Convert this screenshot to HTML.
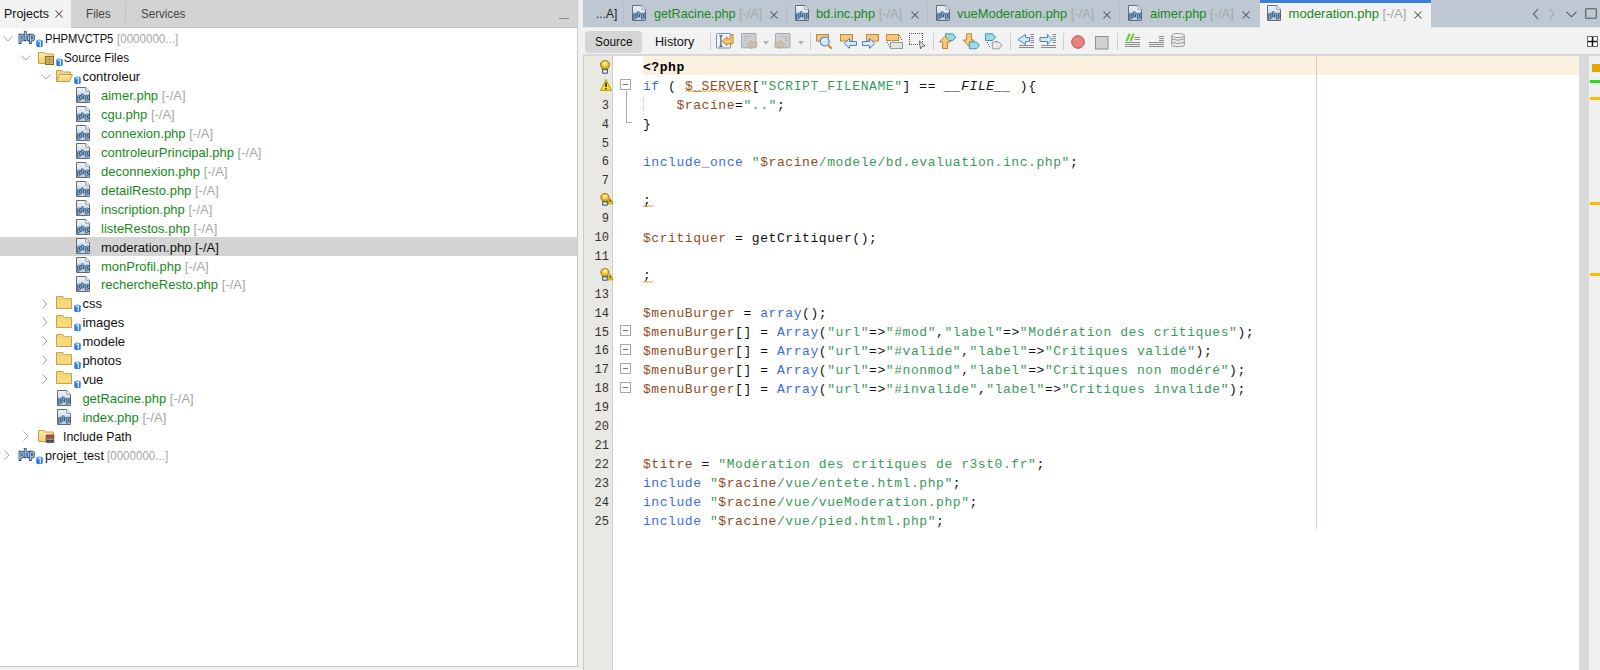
<!DOCTYPE html>
<html><head><meta charset="utf-8"><style>
*{margin:0;padding:0;box-sizing:border-box}
html,body{width:1600px;height:670px;overflow:hidden;background:#f0f0f0;font-family:"Liberation Sans",sans-serif;font-size:13px;color:#000;position:relative}
.abs{position:absolute}
.ic{position:absolute;overflow:visible}
.tt{position:absolute;white-space:nowrap;font-size:13px;line-height:16px;color:#111}
.g{color:#17891a}
.gr{color:#a6a6a6}
.cl{position:absolute;left:643px;white-space:pre;font-family:"Liberation Mono",monospace;font-size:13px;letter-spacing:0.57px;line-height:19px;color:#111}
.cl i{font-style:italic}
.kw{color:#3b6de0}
.v{color:#8f4c1e}
.s{color:#3a9a5c}
.ph{font-weight:bold;color:#000}
.sq{text-decoration:underline wavy #f0a020;text-decoration-thickness:1px;text-underline-offset:2px}
.ln{position:absolute;left:584px;width:25px;text-align:right;font-family:"Liberation Mono",monospace;font-size:12px;line-height:16px;color:#333}
.fold{position:absolute;left:620px;width:11px;height:11px;border:1px solid #a8a8a8;background:#fff}
.fold:after{content:"";position:absolute;left:2px;top:4px;width:5px;height:1px;background:#777}
</style></head><body>

<svg width="0" height="0" style="position:absolute">
<defs>
 <linearGradient id="gpage" x1="0" y1="0" x2="0" y2="1">
  <stop offset="0" stop-color="#eef3f8"/><stop offset="1" stop-color="#b9cbdd"/>
 </linearGradient>
 <linearGradient id="gfold" x1="0" y1="0" x2="0" y2="1">
  <stop offset="0" stop-color="#fbe7a6"/><stop offset="1" stop-color="#efcf74"/>
 </linearGradient>
 <symbol id="phpfile" viewBox="0 0 14 16">
  <path d="M0.5 0.5H9.8L13.5 4.2V15.5H0.5Z" fill="url(#gpage)" stroke="#646d76"/>
  <path d="M9.8 0.5V4.2H13.5" fill="#fff" stroke="#8f99a3"/>
  <path d="M2.2 8.6V14.4M2.2 8.799999999999999H3.5199999999999996Q4.6 8.799999999999999 4.6 10.45Q4.6 12.3 3.5199999999999996 12.3H2.2M6.199999999999999 6.6V12.3M6.199999999999999 8.799999999999999H7.52Q8.6 8.799999999999999 8.6 9.68V12.3M10.2 8.6V14.4M10.2 8.799999999999999H11.52Q12.6 8.799999999999999 12.6 10.45Q12.6 12.3 11.52 12.3H10.2" fill="none" stroke="#2c4a6a" stroke-width="2.3" stroke-linejoin="round"/>
  <path d="M2.2 8.6V14.4M2.2 8.799999999999999H3.5199999999999996Q4.6 8.799999999999999 4.6 10.45Q4.6 12.3 3.5199999999999996 12.3H2.2M6.199999999999999 6.6V12.3M6.199999999999999 8.799999999999999H7.52Q8.6 8.799999999999999 8.6 9.68V12.3M10.2 8.6V14.4M10.2 8.799999999999999H11.52Q12.6 8.799999999999999 12.6 10.45Q12.6 12.3 11.52 12.3H10.2" fill="none" stroke="#9fc6ee" stroke-width="0.9"/>
 </symbol>
 <symbol id="projphp" viewBox="0 0 17 13">
  <path d="M2.0 4.0V12.0M2.0 4.2H3.76Q5.2 4.2 5.2 6.5Q5.2 9.0 3.76 9.0H2.0M7.2 0.6V9.0M7.2 4.2H8.96Q10.4 4.2 10.4 5.44V9.0M12.4 4.0V12.0M12.4 4.2H14.160000000000002Q15.600000000000001 4.2 15.600000000000001 6.5Q15.600000000000001 9.0 14.160000000000002 9.0H12.4" fill="none" stroke="#2e4660" stroke-width="2.8" stroke-linejoin="round" stroke-linecap="round"/>
  <path d="M2.0 4.0V12.0M2.0 4.2H3.76Q5.2 4.2 5.2 6.5Q5.2 9.0 3.76 9.0H2.0M7.2 0.6V9.0M7.2 4.2H8.96Q10.4 4.2 10.4 5.44V9.0M12.4 4.0V12.0M12.4 4.2H14.160000000000002Q15.600000000000001 4.2 15.600000000000001 6.5Q15.600000000000001 9.0 14.160000000000002 9.0H12.4" fill="none" stroke="#9cc4ee" stroke-width="1.3"/>
 </symbol>
 <symbol id="badge" viewBox="0 0 7 9">
  <path d="M0.3 2V7C0.3 8.6 6.7 8.6 6.7 7V2Z" fill="#2a7ae6"/>
  <ellipse cx="3.5" cy="2" rx="3.2" ry="1.6" fill="#3f8ff0"/>
  <path d="M2.2 2.2H4.3V7.5" stroke="#e4f0ff" stroke-width="1.2" fill="none"/>
 </symbol>
 <symbol id="folder" viewBox="0 0 16 13">
  <path d="M0.5 12.5V0.5H6.8L8.3 2.5H15.5V12.5Z" fill="#f7d97c" stroke="#c3a24f"/>
  <path d="M1 2.8H15" stroke="#e9c866" stroke-width="0.6"/>
 </symbol>
 <symbol id="folderopen" viewBox="0 0 17 13">
  <path d="M0.5 12.5V1.5H6L7.5 3H14.5V5" fill="#f3d684" stroke="#c4a04a"/>
  <path d="M0.5 12.5L3.5 5.5H16.5L13.5 12.5Z" fill="url(#gfold)" stroke="#c4a04a"/>
 </symbol>
 <symbol id="srcfolder" viewBox="0 0 17 14">
  <path d="M0.5 12.5V1.5H6L7.5 3H15.5V12.5Z" fill="url(#gfold)" stroke="#c4a04a"/>
  <rect x="7.5" y="5.5" width="8" height="8" fill="#d9b865" stroke="#8a6a2a"/>
  <path d="M8 8.5H15M8 11H15M11.5 6V13" stroke="#a9863d" stroke-width="0.8"/>
 </symbol>
 <symbol id="incfolder" viewBox="0 0 17 14">
  <path d="M0.5 12.5V1.5H6L7.5 3H15.5V12.5Z" fill="url(#gfold)" stroke="#c4a04a"/>
  <rect x="8" y="6" width="8" height="3" rx="1" fill="#b35050" stroke="#6b3030" stroke-width="0.7"/>
  <rect x="8" y="9" width="8" height="2.5" rx="1" fill="#a98a50" stroke="#6b5030" stroke-width="0.7"/>
  <rect x="8" y="11.5" width="8" height="2.3" rx="1" fill="#4a5a8a" stroke="#303a60" stroke-width="0.7"/>
 </symbol>
 <symbol id="chevd" viewBox="0 0 10 6">
  <path d="M0.5 0.5L5 5L9.5 0.5" stroke="#a6a6a6" fill="none" stroke-width="1"/>
 </symbol>
 <symbol id="chevr" viewBox="0 0 6 10">
  <path d="M0.5 0.5L5 5L0.5 9.5" stroke="#a6a6a6" fill="none" stroke-width="1"/>
 </symbol>
 <symbol id="closex" viewBox="0 0 8 8">
  <path d="M0.5 0.5L7.5 7.5M7.5 0.5L0.5 7.5" stroke="#4d4d4d" stroke-width="1.05"/>
 </symbol>
</defs>
</svg>

<svg width="0" height="0" style="position:absolute">
<defs>
 <radialGradient id="gbulb" cx="0.5" cy="0.35" r="0.65">
  <stop offset="0" stop-color="#fffbe0"/><stop offset="0.35" stop-color="#f5d65a"/><stop offset="0.8" stop-color="#d9a514"/><stop offset="1" stop-color="#a87c00"/>
 </radialGradient>
 <symbol id="bulb" viewBox="0 0 10 14">
  <path d="M5 0.5C2.2 0.5 0.5 2.3 0.5 4.6C0.5 6.6 2 7.6 2.4 9.4H7.6C8 7.6 9.5 6.6 9.5 4.6C9.5 2.3 7.8 0.5 5 0.5Z" fill="url(#gbulb)" stroke="#9a7400" stroke-width="0.9"/>
  <rect x="2.5" y="9.5" width="5" height="3.8" rx="0.9" fill="#dfe6ee" stroke="#3f5068" stroke-width="1.1"/>
 </symbol>
 <symbol id="warn" viewBox="0 0 12 12">
  <path d="M6 0.6L11.5 11.4H0.5Z" fill="#f7e400" stroke="#b39200" stroke-width="0.9" stroke-linejoin="round"/>
  <path d="M6 3.8V8" stroke="#111" stroke-width="1.5"/><rect x="5.25" y="9" width="1.5" height="1.4" fill="#111"/>
 </symbol>
 <symbol id="warnsm" viewBox="0 0 7 7">
  <path d="M3.5 0.5L6.6 6.5H0.4Z" fill="#f2e200" stroke="#8a7000" stroke-width="0.8" stroke-linejoin="round"/>
  <path d="M3.5 2.4V4.4" stroke="#111" stroke-width="1"/>
 </symbol>
</defs>
</svg>

<div class="abs" style="left:0;top:0;width:577px;height:666px;background:#fff"></div>
<div class="abs" style="left:577px;top:0;width:1px;height:667px;background:#c9c9c9"></div>
<div class="abs" style="left:0;top:666px;width:578px;height:1px;background:#c9c9c9"></div>
<div class="abs" style="left:0;top:0;width:577px;height:28px;background:#d3d3d3"></div>
<div class="abs" style="left:70px;top:27px;width:507px;height:1px;background:#c4c4c4"></div>
<div class="abs" style="left:0;top:0;width:70.5px;height:28px;background:#f2f2f2"></div>
<div class="tt" style="left:3.5px;top:5.5px;transform:scaleX(0.955);transform-origin:0 0">Projects</div>
<svg class="ic" style="left:55px;top:9.8px;width:8px;height:8px" viewBox="0 0 8 8"><use href="#closex" width="8" height="8"/></svg>
<div class="tt" style="left:85.5px;top:5.5px;color:#444;transform:scaleX(0.9);transform-origin:0 0">Files</div>
<div class="abs" style="left:125px;top:3px;width:1px;height:20px;background:#c2c2c2"></div>
<div class="tt" style="left:141px;top:5.5px;color:#444;transform:scaleX(0.89);transform-origin:0 0">Services</div>
<div class="abs" style="left:559px;top:17.5px;width:10px;height:1.5px;background:#8a8a8a"></div>
<div class="abs" style="left:0;top:236.95px;width:577px;height:18.95px;background:#d4d4d4"></div>
<svg class="ic" style="left:2.5px;top:35.8px;width:10px;height:6px" viewBox="0 0 10 6"><use href="#chevd" width="10" height="6"/></svg>
<svg class="ic" style="left:18px;top:31.1px;width:17px;height:13px" viewBox="0 0 17 13"><use href="#projphp" width="17" height="13"/></svg>
<svg class="ic" style="left:36px;top:38.7px;width:7px;height:9px" viewBox="0 0 7 9"><use href="#badge" width="7" height="9"/></svg>
<div class="tt " style="left:44.5px;top:31.10px;transform:scaleX(0.86);transform-origin:0 0">PHPMVCTP5</div>
<div class="tt " style="left:117px;top:31.10px;transform:scaleX(0.89);transform-origin:0 0"><span class="gr">[0000000...]</span></div>
<svg class="ic" style="left:21px;top:54.8px;width:10px;height:6px" viewBox="0 0 10 6"><use href="#chevd" width="10" height="6"/></svg>
<svg class="ic" style="left:38px;top:50.5px;width:17px;height:14px" viewBox="0 0 17 14"><use href="#srcfolder" width="17" height="14"/></svg>
<svg class="ic" style="left:55.5px;top:58.0px;width:7px;height:9px" viewBox="0 0 7 9"><use href="#badge" width="7" height="9"/></svg>
<div class="tt " style="left:63.5px;top:50.05px;transform:scaleX(0.9);transform-origin:0 0">Source Files</div>
<svg class="ic" style="left:40.5px;top:73.7px;width:10px;height:6px" viewBox="0 0 10 6"><use href="#chevd" width="10" height="6"/></svg>
<svg class="ic" style="left:56px;top:69.2px;width:17px;height:13px" viewBox="0 0 17 13"><use href="#folderopen" width="17" height="13"/></svg>
<svg class="ic" style="left:74px;top:76.4px;width:7px;height:9px" viewBox="0 0 7 9"><use href="#badge" width="7" height="9"/></svg>
<div class="tt " style="left:82.4px;top:69.00px">controleur</div>
<svg class="ic" style="left:76.4px;top:86.5px;width:14px;height:16px" viewBox="0 0 14 16"><use href="#phpfile" width="14" height="16"/></svg>
<div class="tt " style="left:101px;top:87.95px"><span class="g">aimer.php</span> <span class="gr">[-/A]</span></div>
<svg class="ic" style="left:76.4px;top:105.5px;width:14px;height:16px" viewBox="0 0 14 16"><use href="#phpfile" width="14" height="16"/></svg>
<div class="tt " style="left:101px;top:106.90px"><span class="g">cgu.php</span> <span class="gr">[-/A]</span></div>
<svg class="ic" style="left:76.4px;top:124.5px;width:14px;height:16px" viewBox="0 0 14 16"><use href="#phpfile" width="14" height="16"/></svg>
<div class="tt " style="left:101px;top:125.85px"><span class="g">connexion.php</span> <span class="gr">[-/A]</span></div>
<svg class="ic" style="left:76.4px;top:143.4px;width:14px;height:16px" viewBox="0 0 14 16"><use href="#phpfile" width="14" height="16"/></svg>
<div class="tt " style="left:101px;top:144.80px"><span class="g">controleurPrincipal.php</span> <span class="gr">[-/A]</span></div>
<svg class="ic" style="left:76.4px;top:162.3px;width:14px;height:16px" viewBox="0 0 14 16"><use href="#phpfile" width="14" height="16"/></svg>
<div class="tt " style="left:101px;top:163.75px"><span class="g">deconnexion.php</span> <span class="gr">[-/A]</span></div>
<svg class="ic" style="left:76.4px;top:181.3px;width:14px;height:16px" viewBox="0 0 14 16"><use href="#phpfile" width="14" height="16"/></svg>
<div class="tt " style="left:101px;top:182.70px"><span class="g">detailResto.php</span> <span class="gr">[-/A]</span></div>
<svg class="ic" style="left:76.4px;top:200.2px;width:14px;height:16px" viewBox="0 0 14 16"><use href="#phpfile" width="14" height="16"/></svg>
<div class="tt " style="left:101px;top:201.65px"><span class="g">inscription.php</span> <span class="gr">[-/A]</span></div>
<svg class="ic" style="left:76.4px;top:219.2px;width:14px;height:16px" viewBox="0 0 14 16"><use href="#phpfile" width="14" height="16"/></svg>
<div class="tt " style="left:101px;top:220.60px"><span class="g">listeRestos.php</span> <span class="gr">[-/A]</span></div>
<svg class="ic" style="left:76.4px;top:238.1px;width:14px;height:16px" viewBox="0 0 14 16"><use href="#phpfile" width="14" height="16"/></svg>
<div class="tt " style="left:101px;top:239.55px">moderation.php [-/A]</div>
<svg class="ic" style="left:76.4px;top:257.1px;width:14px;height:16px" viewBox="0 0 14 16"><use href="#phpfile" width="14" height="16"/></svg>
<div class="tt " style="left:101px;top:258.50px"><span class="g">monProfil.php</span> <span class="gr">[-/A]</span></div>
<svg class="ic" style="left:76.4px;top:276.1px;width:14px;height:16px" viewBox="0 0 14 16"><use href="#phpfile" width="14" height="16"/></svg>
<div class="tt " style="left:101px;top:277.45px"><span class="g">rechercheResto.php</span> <span class="gr">[-/A]</span></div>
<svg class="ic" style="left:42px;top:298.5px;width:6px;height:10px" viewBox="0 0 6 10"><use href="#chevr" width="6" height="10"/></svg>
<svg class="ic" style="left:56.4px;top:295.6px;width:16px;height:13px" viewBox="0 0 16 13"><use href="#folder" width="16" height="13"/></svg>
<svg class="ic" style="left:73.5px;top:304.0px;width:7px;height:9px" viewBox="0 0 7 9"><use href="#badge" width="7" height="9"/></svg>
<div class="tt " style="left:82.4px;top:296.40px">css</div>
<svg class="ic" style="left:42px;top:317.4px;width:6px;height:10px" viewBox="0 0 6 10"><use href="#chevr" width="6" height="10"/></svg>
<svg class="ic" style="left:56.4px;top:314.6px;width:16px;height:13px" viewBox="0 0 16 13"><use href="#folder" width="16" height="13"/></svg>
<svg class="ic" style="left:73.5px;top:322.9px;width:7px;height:9px" viewBox="0 0 7 9"><use href="#badge" width="7" height="9"/></svg>
<div class="tt " style="left:82.4px;top:315.35px">images</div>
<svg class="ic" style="left:42px;top:336.4px;width:6px;height:10px" viewBox="0 0 6 10"><use href="#chevr" width="6" height="10"/></svg>
<svg class="ic" style="left:56.4px;top:333.5px;width:16px;height:13px" viewBox="0 0 16 13"><use href="#folder" width="16" height="13"/></svg>
<svg class="ic" style="left:73.5px;top:341.9px;width:7px;height:9px" viewBox="0 0 7 9"><use href="#badge" width="7" height="9"/></svg>
<div class="tt " style="left:82.4px;top:334.30px">modele</div>
<svg class="ic" style="left:42px;top:355.3px;width:6px;height:10px" viewBox="0 0 6 10"><use href="#chevr" width="6" height="10"/></svg>
<svg class="ic" style="left:56.4px;top:352.4px;width:16px;height:13px" viewBox="0 0 16 13"><use href="#folder" width="16" height="13"/></svg>
<svg class="ic" style="left:73.5px;top:360.8px;width:7px;height:9px" viewBox="0 0 7 9"><use href="#badge" width="7" height="9"/></svg>
<div class="tt " style="left:82.4px;top:353.25px">photos</div>
<svg class="ic" style="left:42px;top:374.3px;width:6px;height:10px" viewBox="0 0 6 10"><use href="#chevr" width="6" height="10"/></svg>
<svg class="ic" style="left:56.4px;top:371.4px;width:16px;height:13px" viewBox="0 0 16 13"><use href="#folder" width="16" height="13"/></svg>
<svg class="ic" style="left:73.5px;top:379.8px;width:7px;height:9px" viewBox="0 0 7 9"><use href="#badge" width="7" height="9"/></svg>
<div class="tt " style="left:82.4px;top:372.20px">vue</div>
<svg class="ic" style="left:57.3px;top:389.8px;width:14px;height:16px" viewBox="0 0 14 16"><use href="#phpfile" width="14" height="16"/></svg>
<div class="tt " style="left:82.4px;top:391.15px"><span class="g">getRacine.php</span> <span class="gr">[-/A]</span></div>
<svg class="ic" style="left:57.3px;top:408.7px;width:14px;height:16px" viewBox="0 0 14 16"><use href="#phpfile" width="14" height="16"/></svg>
<div class="tt " style="left:82.4px;top:410.10px"><span class="g">index.php</span> <span class="gr">[-/A]</span></div>
<svg class="ic" style="left:23px;top:431.1px;width:6px;height:10px" viewBox="0 0 6 10"><use href="#chevr" width="6" height="10"/></svg>
<svg class="ic" style="left:38px;top:429.4px;width:17px;height:14px" viewBox="0 0 17 14"><use href="#incfolder" width="17" height="14"/></svg>
<div class="tt " style="left:63.3px;top:429.05px;transform:scaleX(0.95);transform-origin:0 0">Include Path</div>
<svg class="ic" style="left:4.2px;top:450.1px;width:6px;height:10px" viewBox="0 0 6 10"><use href="#chevr" width="6" height="10"/></svg>
<svg class="ic" style="left:18px;top:448.0px;width:17px;height:13px" viewBox="0 0 17 13"><use href="#projphp" width="17" height="13"/></svg>
<svg class="ic" style="left:36px;top:455.6px;width:7px;height:9px" viewBox="0 0 7 9"><use href="#badge" width="7" height="9"/></svg>
<div class="tt " style="left:44.8px;top:448.00px;transform:scaleX(0.97);transform-origin:0 0">projet_test</div>
<div class="tt " style="left:107px;top:448.00px;transform:scaleX(0.89);transform-origin:0 0"><span class="gr">[0000000...]</span></div>
<div class="abs" style="left:583px;top:55.5px;width:996px;height:615px;background:#fff"></div>
<div class="abs" style="left:583px;top:0;width:1px;height:670px;background:#cbcbcb"></div>
<div class="abs" style="left:584px;top:55.5px;width:28px;height:615px;background:#e9e8e3"></div>
<div class="abs" style="left:612px;top:55.5px;width:1px;height:615px;background:#cfcfcf"></div>
<div class="abs" style="left:643px;top:55.8px;width:936px;height:19px;background:#f9f1de"></div>
<div class="abs" style="left:1316px;top:55.8px;width:1px;height:473px;background:#e2c3dd"></div>
<div class="abs" style="left:1579px;top:55.5px;width:10px;height:615px;background:#dadada"></div>
<div class="abs" style="left:1589px;top:55.5px;width:11px;height:615px;background:#f0f0f0"></div>
<div class="abs" style="left:1591px;top:62.5px;width:10px;height:10px;background:#e2a600;border:1px solid #e8eef6"></div>
<div class="abs" style="left:1590px;top:80px;width:10px;height:3px;background:#22e022"></div>
<div class="abs" style="left:1590px;top:97px;width:10px;height:3px;background:#ffb900"></div>
<div class="abs" style="left:1590px;top:202px;width:10px;height:3px;background:#ffb900"></div>
<div class="abs" style="left:1590px;top:273px;width:10px;height:3px;background:#ffb900"></div>
<div class="ln" style="top:97.75px">3</div>
<div class="ln" style="top:116.65px">4</div>
<div class="ln" style="top:135.55px">5</div>
<div class="ln" style="top:154.45px">6</div>
<div class="ln" style="top:173.35px">7</div>
<div class="ln" style="top:211.15px">9</div>
<div class="ln" style="top:230.05px">10</div>
<div class="ln" style="top:248.95px">11</div>
<div class="ln" style="top:286.75px">13</div>
<div class="ln" style="top:305.65px">14</div>
<div class="ln" style="top:324.55px">15</div>
<div class="ln" style="top:343.45px">16</div>
<div class="ln" style="top:362.35px">17</div>
<div class="ln" style="top:381.25px">18</div>
<div class="ln" style="top:400.15px">19</div>
<div class="ln" style="top:419.05px">20</div>
<div class="ln" style="top:437.95px">21</div>
<div class="ln" style="top:456.85px">22</div>
<div class="ln" style="top:475.75px">23</div>
<div class="ln" style="top:494.65px">24</div>
<div class="ln" style="top:513.55px">25</div>
<svg class="ic" style="left:600px;top:59.5px;width:10px;height:14px" viewBox="0 0 10 14"><use href="#bulb" width="10" height="14"/></svg>
<svg class="ic" style="left:600px;top:78.5px;width:12px;height:12px" viewBox="0 0 12 12"><use href="#warn" width="12" height="12"/></svg>
<svg class="ic" style="left:600px;top:192.6px;width:10px;height:13px" viewBox="0 0 10 13"><use href="#bulb" width="10" height="13"/></svg>
<svg class="ic" style="left:606.5px;top:198.2px;width:6.5px;height:6.5px" viewBox="0 0 6.5 6.5"><use href="#warnsm" width="6.5" height="6.5"/></svg>
<svg class="ic" style="left:600px;top:268.1px;width:10px;height:13px" viewBox="0 0 10 13"><use href="#bulb" width="10" height="13"/></svg>
<svg class="ic" style="left:606.5px;top:273.8px;width:6.5px;height:6.5px" viewBox="0 0 6.5 6.5"><use href="#warnsm" width="6.5" height="6.5"/></svg>
<div class="fold" style="top:79.25px"></div>
<div class="fold" style="top:324.95px"></div>
<div class="fold" style="top:343.85px"></div>
<div class="fold" style="top:362.75px"></div>
<div class="fold" style="top:381.65px"></div>
<div class="abs" style="left:625.5px;top:90.5px;width:1px;height:32px;background:#a8a8a8"></div>
<div class="abs" style="left:625.5px;top:122px;width:6px;height:1px;background:#a8a8a8"></div>
<div class="abs" style="left:643px;top:97.25px;width:0;height:17px;border-left:1px dotted #c8c8c8"></div>
<svg class="ic" style="left:0;top:0;width:1600px;height:670px" viewBox="0 0 1600 670"><path d="M685 91.7L687 90.2L689 91.7L691 90.2L693 91.7L695 90.2L697 91.7L699 90.2L701 91.7L703 90.2L705 91.7L707 90.2L709 91.7L711 90.2L713 91.7L715 90.2L717 91.7L719 90.2L721 91.7L723 90.2L725 91.7L727 90.2L729 91.7L731 90.2L733 91.7L735 90.2L737 91.7L739 90.2L741 91.7L743 90.2L745 91.7L747 90.2L749 91.7L751 90.2L753 91.7" stroke="#f0a030" stroke-width="1" fill="none"/></svg>
<svg class="ic" style="left:0;top:0;width:1600px;height:670px" viewBox="0 0 1600 670"><path d="M643 206.9L645 205.4L647 206.9L649 205.4L651 206.9L653 205.4" stroke="#f0a030" stroke-width="1" fill="none"/></svg>
<svg class="ic" style="left:0;top:0;width:1600px;height:670px" viewBox="0 0 1600 670"><path d="M643 282.5L645 281.0L647 282.5L649 281.0L651 282.5L653 281.0" stroke="#f0a030" stroke-width="1" fill="none"/></svg>
<div class="cl" style="top:58.45px"><b class="ph">&lt;?php</b></div>
<div class="cl" style="top:77.35px"><span class="kw">if</span> ( <span class="v">$_SERVER</span>[<span class="s">"SCRIPT_FILENAME"</span>] == <i>__FILE__</i> ){</div>
<div class="cl" style="top:96.25px">    <span class="v">$racine</span>=<span class="s">".."</span>;</div>
<div class="cl" style="top:115.15px">}</div>
<div class="cl" style="top:152.95px"><span class="kw">include_once</span> <span class="s">"<span class="v">$racine</span>/modele/bd.evaluation.inc.php"</span>;</div>
<div class="cl" style="top:190.75px">;</div>
<div class="cl" style="top:228.55px"><span class="v">$critiquer</span> = getCritiquer();</div>
<div class="cl" style="top:266.35px">;</div>
<div class="cl" style="top:304.15px"><span class="v">$menuBurger</span> = <span class="kw">array</span>();</div>
<div class="cl" style="top:323.05px"><span class="v">$menuBurger</span>[] = <span class="kw">Array</span>(<span class="s">"url"</span>=&gt;<span class="s">"#mod"</span>,<span class="s">"label"</span>=&gt;<span class="s">"Modération des critiques"</span>);</div>
<div class="cl" style="top:341.95px"><span class="v">$menuBurger</span>[] = <span class="kw">Array</span>(<span class="s">"url"</span>=&gt;<span class="s">"#valide"</span>,<span class="s">"label"</span>=&gt;<span class="s">"Critiques validé"</span>);</div>
<div class="cl" style="top:360.85px"><span class="v">$menuBurger</span>[] = <span class="kw">Array</span>(<span class="s">"url"</span>=&gt;<span class="s">"#nonmod"</span>,<span class="s">"label"</span>=&gt;<span class="s">"Critiques non modéré"</span>);</div>
<div class="cl" style="top:379.75px"><span class="v">$menuBurger</span>[] = <span class="kw">Array</span>(<span class="s">"url"</span>=&gt;<span class="s">"#invalide"</span>,<span class="s">"label"</span>=&gt;<span class="s">"Critiques invalide"</span>);</div>
<div class="cl" style="top:455.35px"><span class="v">$titre</span> = <span class="s">"Modération des critiques de r3st0.fr"</span>;</div>
<div class="cl" style="top:474.25px"><span class="kw">include</span> <span class="s">"<span class="v">$racine</span>/vue/entete.html.php"</span>;</div>
<div class="cl" style="top:493.15px"><span class="kw">include</span> <span class="s">"<span class="v">$racine</span>/vue/vueModeration.php"</span>;</div>
<div class="cl" style="top:512.05px"><span class="kw">include</span> <span class="s">"<span class="v">$racine</span>/vue/pied.html.php"</span>;</div>
<div class="abs" style="left:583px;top:0;width:1017px;height:27px;background:#bec8d2"></div>
<div class="abs" style="left:583px;top:27px;width:1017px;height:1px;background:#e4e8ec"></div>
<div class="abs" style="left:623px;top:3px;width:1px;height:21px;background:#b3bdc7"></div>
<div class="abs" style="left:786px;top:3px;width:1px;height:21px;background:#b3bdc7"></div>
<div class="abs" style="left:927px;top:3px;width:1px;height:21px;background:#b3bdc7"></div>
<div class="abs" style="left:1119px;top:3px;width:1px;height:21px;background:#b3bdc7"></div>
<div class="tt" style="left:596px;top:5.5px;color:#222;transform:scaleX(.92);transform-origin:0 0">...A]</div>
<div class="abs" style="left:1259.5px;top:0;width:171px;height:28px;background:#f2f2f2"></div>
<div class="abs" style="left:1259.5px;top:0;width:171px;height:2.5px;background:#3b7fd6"></div>
<svg class="ic" style="left:632px;top:5.2px;width:14px;height:16px" viewBox="0 0 14 16"><use href="#phpfile" width="14" height="16"/></svg>
<div class="tt" style="left:653.5px;top:5.5px;transform:scaleX(0.973);transform-origin:0 0"><span class="g">getRacine.php</span> <span class="gr">[-/A]</span></div>
<svg class="ic" style="left:770px;top:10.5px;width:8px;height:8px" viewBox="0 0 8 8"><use href="#closex" width="8" height="8"/></svg>
<svg class="ic" style="left:795.2px;top:5.2px;width:14px;height:16px" viewBox="0 0 14 16"><use href="#phpfile" width="14" height="16"/></svg>
<div class="tt" style="left:815.8px;top:5.5px;transform:scaleX(0.985);transform-origin:0 0"><span class="g">bd.inc.php</span> <span class="gr">[-/A]</span></div>
<svg class="ic" style="left:910.5px;top:10.5px;width:8px;height:8px" viewBox="0 0 8 8"><use href="#closex" width="8" height="8"/></svg>
<svg class="ic" style="left:935.8px;top:5.2px;width:14px;height:16px" viewBox="0 0 14 16"><use href="#phpfile" width="14" height="16"/></svg>
<div class="tt" style="left:956.5px;top:5.5px;transform:scaleX(0.99);transform-origin:0 0"><span class="g">vueModeration.php</span> <span class="gr">[-/A]</span></div>
<svg class="ic" style="left:1103px;top:10.5px;width:8px;height:8px" viewBox="0 0 8 8"><use href="#closex" width="8" height="8"/></svg>
<svg class="ic" style="left:1128.4px;top:5.2px;width:14px;height:16px" viewBox="0 0 14 16"><use href="#phpfile" width="14" height="16"/></svg>
<div class="tt" style="left:1149.7px;top:5.5px;transform:scaleX(0.99);transform-origin:0 0"><span class="g">aimer.php</span> <span class="gr">[-/A]</span></div>
<svg class="ic" style="left:1242px;top:10.5px;width:8px;height:8px" viewBox="0 0 8 8"><use href="#closex" width="8" height="8"/></svg>
<svg class="ic" style="left:1267px;top:5.2px;width:14px;height:16px" viewBox="0 0 14 16"><use href="#phpfile" width="14" height="16"/></svg>
<div class="tt" style="left:1288.6px;top:5.5px;transform:scaleX(1);transform-origin:0 0"><span class="g">moderation.php</span> <span class="gr">[-/A]</span></div>
<svg class="ic" style="left:1414px;top:10.5px;width:8px;height:8px" viewBox="0 0 8 8"><use href="#closex" width="8" height="8"/></svg>
<svg class="ic" style="left:1532px;top:8px;width:8px;height:12px" viewBox="0 0 8 12"><path d="M6 1L1.5 6L6 11" stroke="#555" fill="none" stroke-width="1.1"/></svg>
<svg class="ic" style="left:1548px;top:8px;width:8px;height:12px" viewBox="0 0 8 12"><path d="M1.5 1L6 6L1.5 11" stroke="#a3a3a3" fill="none" stroke-width="1.1"/></svg>
<svg class="ic" style="left:1566px;top:10.5px;width:11px;height:7px" viewBox="0 0 11 7"><path d="M0.5 0.8L5.5 5.8L10.5 0.8" stroke="#555" fill="none" stroke-width="1.1"/></svg>
<svg class="ic" style="left:1585px;top:8px;width:12px;height:11px" viewBox="0 0 12 11"><rect x="0.7" y="0.7" width="10.6" height="9.6" rx="0.8" stroke="#555" fill="none" stroke-width="1.1"/></svg>
<div class="abs" style="left:583px;top:28px;width:1017px;height:26px;background:#f2f2f2"></div>
<div class="abs" style="left:583px;top:54px;width:1017px;height:1.5px;background:#d6d6d6"></div>
<div class="abs" style="left:585px;top:31px;width:57px;height:21.5px;background:#d5d5d5;border-radius:4px"></div>
<div class="tt" style="left:595px;top:33.5px;transform:scaleX(0.91);transform-origin:0 0">Source</div>
<div class="tt" style="left:655px;top:33.5px;transform:scaleX(0.97);transform-origin:0 0">History</div>
<div class="abs" style="left:710px;top:33px;width:1px;height:17px;background:#cfcfcf"></div>
<div class="abs" style="left:810px;top:33px;width:1px;height:17px;background:#cfcfcf"></div>
<div class="abs" style="left:933px;top:33px;width:1px;height:17px;background:#cfcfcf"></div>
<div class="abs" style="left:1009.5px;top:33px;width:1px;height:17px;background:#cfcfcf"></div>
<div class="abs" style="left:1063px;top:33px;width:1px;height:17px;background:#cfcfcf"></div>
<div class="abs" style="left:1117px;top:33px;width:1px;height:17px;background:#cfcfcf"></div>
<svg class="ic" style="left:716px;top:33px;width:18px;height:17px" viewBox="0 0 18 17"><rect x="0.5" y="0.5" width="14" height="14.5" rx="0.8" fill="#eef6fd" stroke="#7393b5"/><path d="M3.3 2.7H6.5M4.9 2.7V13.3M3.3 13.3H6.5" stroke="#5d6166" stroke-width="1.3"/><path d="M17 1V10.8H11V12.6L6.2 8.3L11 3.9V6H13.9V3Z" fill="#f8c56e" stroke="#b9782c" stroke-width="0.9" stroke-linejoin="round"/></svg>
<svg class="ic" style="left:741px;top:33px;width:18px;height:17px" viewBox="0 0 18 17"><rect x="0.5" y="0.5" width="14.5" height="14.3" rx="0.6" fill="#ccd0d4" stroke="#a4aab1"/><path d="M3 3.5H10M3 5.5H6M3 7.5H5" stroke="#b3b8bd"/><path d="M5.8 11.4L10.3 7.2V9.3H15.8V13.7H10.3V16Z" fill="#cfc1a8" stroke="#bcae95" stroke-width="0.8" stroke-linejoin="round"/></svg>
<svg class="ic" style="left:763px;top:40.5px;width:6px;height:4px" viewBox="0 0 6 4"><path d="M0 0H6L3 4Z" fill="#b5b5b5"/></svg>
<svg class="ic" style="left:774px;top:33px;width:18px;height:17px" viewBox="0 0 18 17"><rect x="1.5" y="0.5" width="14.5" height="14.3" rx="0.6" fill="#ccd0d4" stroke="#a4aab1"/><path d="M7 3.5H14M10 5.5H14M11 7.5H14" stroke="#b3b8bd"/><path d="M11 11.4L6.5 7.2V9.3H0.8V13.7H6.5V16Z" fill="#cfc1a8" stroke="#bcae95" stroke-width="0.8" stroke-linejoin="round"/></svg>
<svg class="ic" style="left:797.5px;top:40.5px;width:6px;height:4px" viewBox="0 0 6 4"><path d="M0 0H6L3 4Z" fill="#b5b5b5"/></svg>
<svg class="ic" style="left:816px;top:33px;width:18px;height:17px" viewBox="0 0 18 17"><rect x="0.5" y="1.5" width="12" height="6.5" fill="#f7c778" stroke="#b98a45"/><circle cx="8.7" cy="8.5" r="4.5" fill="#d8e8fb" stroke="#4b82d0" stroke-width="1.1"/><path d="M11.8 11.8L15.8 15.8" stroke="#c98a2c" stroke-width="2"/></svg>
<svg class="ic" style="left:840px;top:33px;width:18px;height:17px" viewBox="0 0 18 17"><rect x="0.5" y="1.5" width="12" height="6.5" fill="#f7c778" stroke="#b98a45"/><path d="M16.5 8.5H9.5V5.5L4.2 10.5L9.5 15.5V12.5H16.5Z" fill="#d8e8fb" stroke="#4b82d0" stroke-linejoin="round"/></svg>
<svg class="ic" style="left:862px;top:33px;width:18px;height:17px" viewBox="0 0 18 17"><rect x="4.5" y="1.5" width="12" height="6.5" fill="#f7c778" stroke="#b98a45"/><path d="M0.5 8.5H7.5V5.5L12.8 10.5L7.5 15.5V12.5H0.5Z" fill="#d8e8fb" stroke="#4b82d0" stroke-linejoin="round"/></svg>
<svg class="ic" style="left:886px;top:33px;width:18px;height:17px" viewBox="0 0 18 17"><rect x="0.5" y="1.5" width="12" height="6" fill="#f7c778" stroke="#c58a35"/><rect x="4.5" y="9.5" width="12" height="6" fill="#e4e4e4" stroke="#9a9a9a"/><g fill="#555"><rect x="13" y="2" width="1" height="1"/><rect x="14" y="4" width="1" height="1"/><rect x="15" y="6" width="1" height="1"/><rect x="1" y="9" width="1" height="1"/><rect x="2" y="11" width="1" height="1"/><rect x="3" y="13" width="1" height="1"/></g></svg>
<svg class="ic" style="left:908px;top:33px;width:18px;height:17px" viewBox="0 0 18 17"><g fill="#555"><rect x="1" y="0" width="1" height="1"/><rect x="1" y="11" width="1" height="1"/><rect x="3" y="0" width="1" height="1"/><rect x="3" y="11" width="1" height="1"/><rect x="5" y="0" width="1" height="1"/><rect x="5" y="11" width="1" height="1"/><rect x="7" y="0" width="1" height="1"/><rect x="7" y="11" width="1" height="1"/><rect x="9" y="0" width="1" height="1"/><rect x="9" y="11" width="1" height="1"/><rect x="11" y="0" width="1" height="1"/><rect x="11" y="11" width="1" height="1"/><rect x="13" y="0" width="1" height="1"/><rect x="13" y="11" width="1" height="1"/><rect x="1" y="0" width="1" height="1"/><rect x="14" y="0" width="1" height="1"/><rect x="1" y="2" width="1" height="1"/><rect x="14" y="2" width="1" height="1"/><rect x="1" y="4" width="1" height="1"/><rect x="14" y="4" width="1" height="1"/><rect x="1" y="6" width="1" height="1"/><rect x="14" y="6" width="1" height="1"/><rect x="1" y="8" width="1" height="1"/><rect x="14" y="8" width="1" height="1"/><rect x="1" y="10" width="1" height="1"/><rect x="14" y="10" width="1" height="1"/></g><path d="M11.5 8L17 13L14 13.3L12.5 16Z" fill="#fff" stroke="#555" stroke-width="0.9" stroke-linejoin="round"/></svg>
<svg class="ic" style="left:939px;top:33px;width:18px;height:17px" viewBox="0 0 18 17"><path d="M6.6 0.8H13.8L16.8 4.15L13.8 7.5H6.6Z" fill="#9ad8ea" stroke="#3f97ad" stroke-linejoin="round"/><path d="M5.8 3.4L11.6 9H8.5V15.5H3.6V9H0.4Z" fill="#f8c878" stroke="#c08533" stroke-linejoin="round"/></svg>
<svg class="ic" style="left:963px;top:33px;width:18px;height:17px" viewBox="0 0 18 17"><path d="M3.5 0.8H8.5V7H11.2L5.6 13.2L0.2 7H3.5Z" fill="#f8c878" stroke="#c08533" stroke-linejoin="round"/><path d="M6.3 9H13.5L16.5 12.4L13.5 15.8H6.3Z" fill="#9ad8ea" stroke="#3f97ad" stroke-linejoin="round"/></svg>
<svg class="ic" style="left:985px;top:33px;width:18px;height:17px" viewBox="0 0 18 17"><path d="M0.5 0.8H7.6L10.6 4.15L7.6 7.5H0.5Z" fill="#9ad8ea" stroke="#3f97ad" stroke-linejoin="round"/><path d="M7.3 9H14L17 12.4L14 15.8H7.3Z" fill="#e8e8e8" stroke="#9a9a9a" stroke-linejoin="round"/><g fill="#555"><rect x="2" y="9" width="1" height="1"/><rect x="3" y="11" width="1" height="1"/><rect x="4" y="13" width="1" height="1"/><rect x="11" y="8" width="1" height="1"/></g></svg>
<svg class="ic" style="left:1016.5px;top:33px;width:18px;height:16px" viewBox="0 0 18 16"><path d="M8.5 1.5V4.5H12.5V8.5H8.5V11.5L1 6.5Z" fill="#d8e8fb" stroke="#4b82d0"/><path d="M13.5 1.5H17M13.5 3.5H17M13.5 5.5H17M13.5 7.5H17M13.5 9.5H17M2 12.5H17M2 14.5H17" stroke="#8a8a8a" stroke-width="1"/></svg>
<svg class="ic" style="left:1039px;top:33px;width:18px;height:16px" viewBox="0 0 18 16"><path d="M8.5 1.5V4.5H1V8.5H8.5V11.5L13 6.5Z" fill="#d8e8fb" stroke="#4b82d0"/><path d="M13.5 1.5H17M13.5 3.5H17M13.5 5.5H17M13.5 7.5H17M13.5 9.5H17M2 12.5H17M2 14.5H17" stroke="#8a8a8a" stroke-width="1"/></svg>
<svg class="ic" style="left:1071px;top:35px;width:14px;height:14px" viewBox="0 0 14 14"><circle cx="7" cy="7" r="6.3" fill="#e8827a" stroke="#a44a44" stroke-width="0.9"/></svg>
<svg class="ic" style="left:1095px;top:35.5px;width:14px;height:14px" viewBox="0 0 14 14"><rect x="0.5" y="0.5" width="12.5" height="12.5" fill="#d0d0d0" stroke="#8f8f8f"/></svg>
<svg class="ic" style="left:1123.5px;top:33px;width:18px;height:15px" viewBox="0 0 18 15"><path d="M2.5 8L5.8 0.8M6.5 8L9.8 0.8" stroke="#72cc3c" stroke-width="2.3"/><path d="M10.5 4.5H16M10.5 6.5H16M1 9.5H16M1 11.5H16M1 13.5H16" stroke="#8a8a8a" stroke-width="1"/></svg>
<svg class="ic" style="left:1147.5px;top:33px;width:18px;height:15px" viewBox="0 0 18 15"><path d="M11 3.5H16M11 5.5H16M11 7.5H16M1 9.5H16M1 11.5H16M1 13.5H16" stroke="#8a8a8a" stroke-width="1"/></svg>
<svg class="ic" style="left:1171px;top:33px;width:14px;height:15px" viewBox="0 0 14 15"><path d="M0.7 2.5V12.5C0.7 14 13.3 14 13.3 12.5V2.5" fill="#ebebeb" stroke="#9a9a9a"/><ellipse cx="7" cy="2.5" rx="6.3" ry="2" fill="#f4f4f4" stroke="#9a9a9a"/><path d="M0.7 6Q7 8.5 13.3 6M0.7 9.3Q7 11.8 13.3 9.3" fill="none" stroke="#9a9a9a"/></svg>
<svg class="ic" style="left:1587px;top:36px;width:11px;height:11px" viewBox="0 0 11 11"><rect x="0.5" y="0.5" width="10" height="10" fill="#fff" stroke="#666"/><path d="M5.5 1V10M1 5.5H10" stroke="#111" stroke-width="1.6"/><circle cx="3" cy="3" r="1.6" fill="#fff"/><circle cx="8" cy="8" r="1.6" fill="#fff"/></svg>
</body></html>
